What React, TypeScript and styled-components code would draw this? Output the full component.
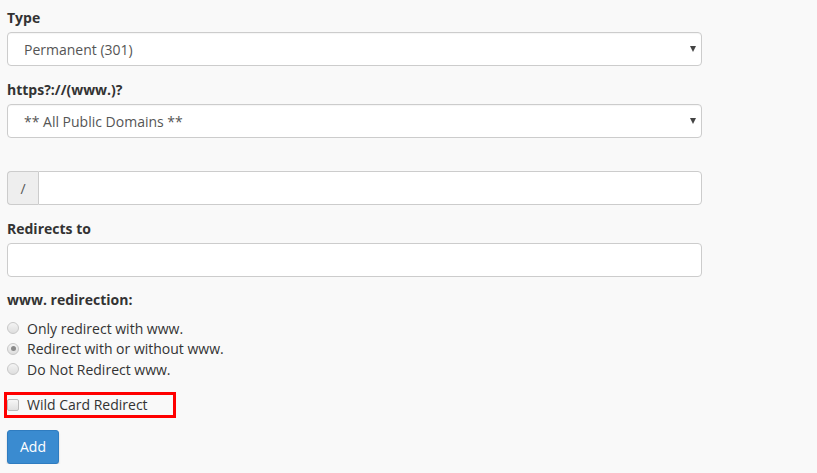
import React from 'react'
import styled, { createGlobalStyle } from 'styled-components'

const GlobalStyle = createGlobalStyle`
  html, body {
    margin: 0;
    padding: 0;
    background: #f9f9f9;
    font-family: 'Open Sans', 'Liberation Sans', sans-serif;
    color: #333;
  }
`

const Page = styled.form`
  padding: 8px 0 0 7px;
  width: 695px;
`

const Label = styled.label<{ $gap?: number }>`
  display: block;
  margin-top: ${p => p.$gap ?? 0}px;
  margin-bottom: 4px;
  font-size: 14px;
  line-height: 20px;
  font-weight: 700;
  color: #333;
`

const SelectWrap = styled.div`
  position: relative;
  height: 34px;
`

const Select = styled.select`
  appearance: none;
  box-sizing: border-box;
  width: 100%;
  height: 34px;
  padding: 0 30px 0 16px;
  font-family: inherit;
  font-size: 14px;
  color: #555;
  background: #fff;
  border: 1px solid #ccc;
  border-radius: 4px;
  box-shadow: inset 0 1px 1px rgba(0, 0, 0, 0.04);
`

const Arrow = styled.span`
  position: absolute;
  right: 6px;
  top: 14px;
  width: 0;
  height: 0;
  border-left: 3px solid transparent;
  border-right: 3px solid transparent;
  border-top: 6px solid #444;
  pointer-events: none;
`

const InputGroup = styled.div<{ $gap?: number }>`
  display: flex;
  height: 34px;
  margin-top: ${p => p.$gap ?? 0}px;
`

const Addon = styled.span`
  box-sizing: border-box;
  width: 31px;
  display: flex;
  align-items: center;
  justify-content: center;
  font-size: 14px;
  color: #555;
  background: #eee;
  border: 1px solid #ccc;
  border-right: none;
  border-radius: 4px 0 0 4px;
`

const TextInput = styled.input<{ $grouped?: boolean }>`
  box-sizing: border-box;
  flex: 1;
  width: 100%;
  height: 34px;
  padding: 0 12px;
  font-family: inherit;
  font-size: 14px;
  background: #fff;
  border: 1px solid #ccc;
  border-radius: ${p => (p.$grouped ? '0 4px 4px 0' : '4px')};
  display: block;
`

const RadioList = styled.div`
  display: flex;
  flex-direction: column;
  margin-top: 8px;
`

const Option = styled.label`
  display: flex;
  align-items: center;
  gap: 8px;
  height: 20.5px;
  font-size: 14px;
  color: #333;
`

const Radio = styled.span<{ $checked?: boolean }>`
  box-sizing: border-box;
  width: 12px;
  height: 12px;
  border-radius: 50%;
  border: 1px solid #c8c8c8;
  background: linear-gradient(#f4f4f4, #dedede);
  display: flex;
  align-items: center;
  justify-content: center;

  &::after {
    content: '';
    width: 5px;
    height: 5px;
    border-radius: 50%;
    background: ${p => (p.$checked ? '#8a8a8a' : 'transparent')};
  }
`

const Highlight = styled.div`
  box-sizing: border-box;
  width: 172px;
  height: 26px;
  margin: 12px 0 0 -3px;
  border: 3px solid #f00;
  display: flex;
  align-items: center;
  gap: 8px;
  padding-left: 0;
  font-size: 14px;
  color: #333;
`

const Checkbox = styled.span`
  box-sizing: border-box;
  width: 12px;
  height: 12px;
  border: 1px solid #bbb;
  border-radius: 2px;
  background: linear-gradient(#f6f6f6, #e0e0e0);
`

const AddButton = styled.button`
  display: block;
  margin-top: 12px;
  width: 52px;
  height: 34px;
  font-family: inherit;
  font-size: 14px;
  color: #fff;
  background: #3a8bd0;
  border: 1px solid #2f7cc0;
  border-radius: 3px;
  box-shadow: 0 2px 2px rgba(0, 0, 0, 0.18);
  padding: 0;
`

const App = () => (
  <>
    <GlobalStyle />
    <Page>
      <Label>Type</Label>
      <SelectWrap>
        <Select defaultValue="301">
          <option value="301">Permanent (301)</option>
          <option value="302">Temporary (302)</option>
        </Select>
        <Arrow />
      </SelectWrap>

      <Label $gap={14}>https?://(www.)?</Label>
      <SelectWrap>
        <Select defaultValue="all">
          <option value="all">** All Public Domains **</option>
        </Select>
        <Arrow />
      </SelectWrap>

      <InputGroup $gap={33}>
        <Addon>/</Addon>
        <TextInput $grouped type="text" />
      </InputGroup>

      <Label $gap={14}>Redirects to</Label>
      <TextInput type="text" />

      <Label $gap={13}>www. redirection:</Label>
      <RadioList>
        <Option>
          <Radio />
          Only redirect with www.
        </Option>
        <Option>
          <Radio $checked />
          Redirect with or without www.
        </Option>
        <Option>
          <Radio />
          Do Not Redirect www.
        </Option>
      </RadioList>

      <Highlight>
        <Checkbox />
        Wild Card Redirect
      </Highlight>

      <AddButton type="button">Add</AddButton>
    </Page>
  </>
)

export default App
